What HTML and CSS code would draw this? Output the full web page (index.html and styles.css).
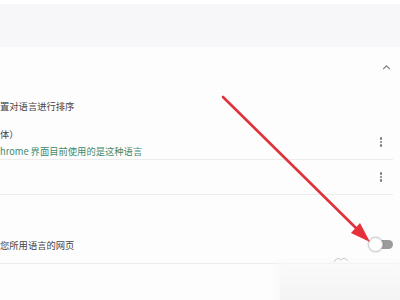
FILE: index.html
```html
<!DOCTYPE html>
<html lang="zh-CN">
<head>
<meta charset="utf-8">
<link rel="stylesheet" href="styles.css">
</head>
<body>
<div class="page">
  <div class="top"></div>
  <div class="band"></div>
  <div class="card">
    <div class="head">
      <svg class="chev" viewBox="0 0 10 6" width="9" height="5"><path d="M1 5 L5 1 L9 5" fill="none" stroke="#7a7a7a" stroke-width="1.4"/></svg>
    </div>
    <div class="hint">置对语言进行排序</div>
    <div class="lang">
      <div class="lang-text">
        <div class="name">体）</div>
        <div class="sub">hrome 界面目前使用的是这种语言</div>
      </div>
      <span class="kebab"><i></i><i></i><i></i></span>
    </div>
    <div class="lang lang-second">
      <div class="lang-text"></div>
      <span class="kebab"><i></i><i></i><i></i></span>
    </div>
    <div class="spacer"></div>
    <div class="toggle-row">
      <div class="label">您所用语言的网页</div>
      <span class="switch"><span class="knob"></span></span>
    </div>
  </div>
  <div class="shade">
    <svg class="wave" viewBox="0 0 16 7" width="16" height="7"><path d="M1 6 Q4 0 8 4 Q11 0 15 5" fill="none" stroke="#c8c8c8" stroke-width="1"/></svg>
  </div>
  <svg class="arrow" viewBox="0 0 400 300" width="400" height="300">
    <line x1="223" y1="97" x2="358" y2="230" stroke="#e0323a" stroke-width="2.6" stroke-linecap="round"/>
    <polygon points="370,242 351,233 360,223" fill="#e8303a"/>
  </svg>
</div>
</body>
</html>
```
FILE: styles.css
```css
html, body {
  margin: 0;
  padding: 0;
  background: #fdfdfd;
}
body {
  font-family: "Noto Sans CJK SC", "Noto Sans", sans-serif;
  color: #444444;
  font-size: 9.3px;
}
.page {
  position: relative;
  width: 400px;
  height: 300px;
  overflow: hidden;
}
.top {
  height: 4px;
  background: #ffffff;
}
.band {
  height: 43px;
  background: #f7f7f9;
}
.card {
  display: flex;
  flex-direction: column;
  width: 393px;
}
.head {
  height: 40px;
  display: flex;
  align-items: center;
  justify-content: flex-end;
  padding-right: 2px;
}
.chev {
  display: block;
}
.hint {
  height: 38px;
  display: flex;
  align-items: center;
}
.lang {
  height: 34px;
  display: flex;
  align-items: center;
  justify-content: space-between;
  border-bottom: 1px solid #ececec;
  padding-right: 11px;
}
.lang-text {
  display: flex;
  flex-direction: column;
  gap: 3px;
}
.name, .sub {
  line-height: 14px;
}
.sub {
  color: #3f8a6c;
}
.kebab {
  display: flex;
  flex-direction: column;
  gap: 1.2px;
}
.kebab i {
  display: block;
  width: 2.4px;
  height: 2.4px;
  border-radius: 50%;
  background: #777;
}
.spacer {
  height: 31px;
}
.toggle-row {
  height: 38px;
  width: 400px;
  display: flex;
  align-items: center;
  justify-content: space-between;
  border-bottom: 1px solid #ececec;
  box-sizing: border-box;
  padding-right: 7px;
}
.switch {
  position: relative;
  width: 23px;
  height: 9px;
  border-radius: 5px;
  background: #9b9b9b;
}
.knob {
  position: absolute;
  left: -2px;
  top: -3px;
  width: 13px;
  height: 13px;
  border-radius: 50%;
  background: #fff;
  border: 1px solid #cfcfcf;
  box-shadow: 0 0 2px rgba(0,0,0,0.25);
}
.shade {
  position: absolute;
  left: 280px;
  top: 265px;
  width: 120px;
  height: 35px;
  background: linear-gradient(#fafafa, #f4f4f4);
  box-shadow: 0 0 8px 3px #f8f8f8;
}
.wave {
  position: absolute;
  left: 53px;
  top: -9px;
}
.arrow {
  position: absolute;
  left: 0;
  top: 0;
  pointer-events: none;
}
```
